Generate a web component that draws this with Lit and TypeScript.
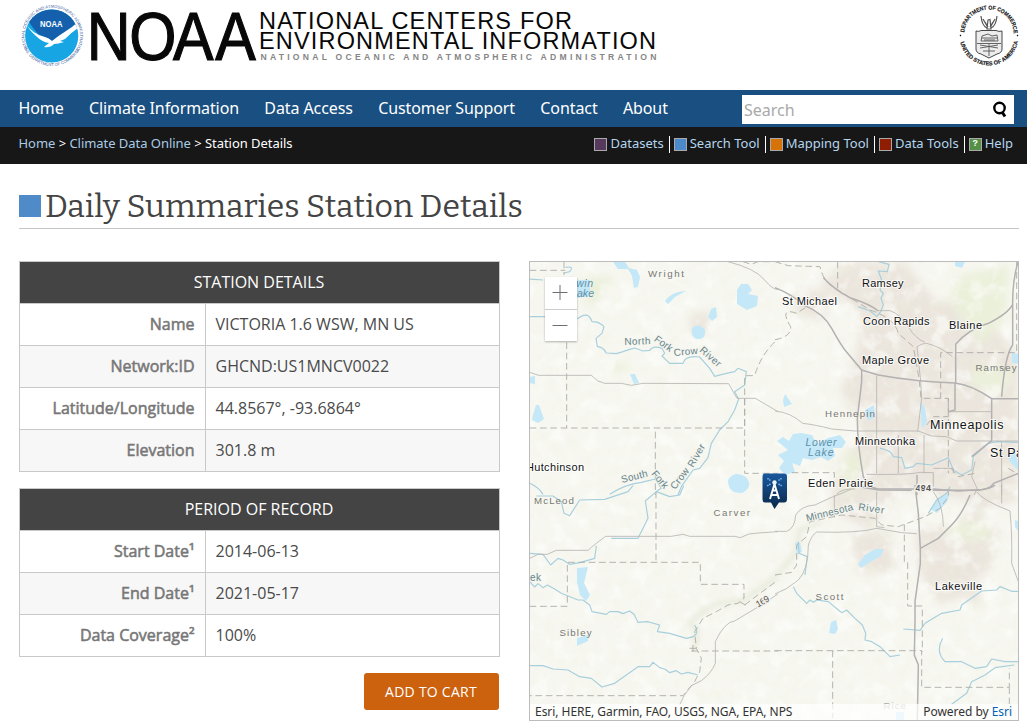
import { LitElement, html, css, svg } from "lit";
import { customElement, property } from "lit/decorators.js";

const NW = "translate(528 255) scale(.33333)";
const NE = "translate(775 255) scale(.33333)";
const SW = "translate(528 485) scale(.33333)";
const SE = "translate(775 485) scale(.33333)";

type Label = [string, number, number, number, number, string, number?];
// text, x, baseline, length, size, class, rotation
const labels: Label[] = [
  ["Wright", 648, 277.3, 36, 9.7, "county"],
  ["Hennepin", 825, 417, 50, 9.7, "county"],
  ["Ramsey", 975.5, 371, 41, 9.7, "county"],
  ["McLeod", 534, 504, 40, 9.7, "county"],
  ["Carver", 713.5, 516, 36.5, 9.7, "county"],
  ["Sibley", 559.5, 636, 32, 9.7, "county"],
  ["Scott", 815.5, 600, 28, 9.7, "county"],
  ["Rice", 883.5, 709, 22.5, 9.7, "county faint"],
  ["Ramsey", 862, 287, 41.5, 11, "city"],
  ["St Michael", 782, 305, 55, 11, "city"],
  ["Coon Rapids", 863, 325, 66.5, 11, "city"],
  ["Blaine", 949, 329, 33, 11, "city"],
  ["Maple Grove", 862, 364, 67, 11, "city"],
  ["Minneapolis", 930, 429, 73.5, 12.5, "city"],
  ["St Paul", 990, 457, 44, 12.5, "city"],
  ["Minnetonka", 855, 445, 60, 11, "city"],
  ["Eden Prairie", 808, 487, 65, 11, "city"],
  ["Lakeville", 935, 590, 47, 11, "city"],
  ["Hutchinson", 526, 471, 58, 11, "city"],
  ["Twin", 570, 287, 23, 10.5, "water"],
  ["Lake", 571, 297, 23, 10.5, "water"],
  ["Lower", 805.5, 446, 31, 10.5, "water"],
  ["Lake", 808, 456.3, 25.5, 10.5, "water"],
  ["ek", 530, 581, 11, 10, "stream"],
  ["North", 624.5, 345, 26, 10, "stream", -2],
  ["Fork", 653.5, 340.5, 20, 10, "stream", 36],
  ["Crow", 674, 356, 24, 10, "stream", -5],
  ["River", 699, 351, 25, 10, "stream", 41],
  ["South", 622, 483, 27, 10, "stream", -14],
  ["Fork", 651, 474, 20, 10, "stream", 50],
  ["Crow", 675, 490, 24, 10, "stream", -52],
  ["River", 693, 468, 25, 10, "stream", -60],
  ["Minnesota", 807, 521.5, 48, 10, "stream", -14],
  ["River", 858, 510, 26, 10, "stream", 8],
];

const roads = {
  nw: [
    "M5 352L32 361L190 361Q208 382 230 385L280 385L310 391L345 385L602 386L627 430H682L750 470",
    "M600 20Q680 40 708 73T750 103",
  ],
  ne: [
    "M305 362V655M370 540V655M447 540V655M428 530L440 430L437 378L426 275Q440 265 455 265Q497 275 532 305",
    "M0 468Q46 472 83 505Q120 509 170 522L240 528H430L470 543L515 545L545 558H730M310 167H345Q380 180 400 215T450 262",
    "M275 658Q400 660 435 652L475 653V695M475 640H535V655M520 470H648M185 718Q200 700 240 702M730 500V535M680 560V720M598 720L606 700L590 665L600 620",
  ],
  sw: [
    "M5 220L30 208H58L85 196H180Q197 180 233 154H430L465 148L485 154H620L637 158Q662 143 690 144L750 140",
    "M750 327Q700 360 680 372L620 408Q590 410 562 470V535Q550 565 520 587L490 602L468 632L455 660",
  ],
  se: [
    "M0 139H35Q60 130 62 90Q80 62 120 60Q160 40 200 25L230 12M305 20V125L328 128M305 130Q250 145 125 141Q110 150 100 180Q100 255 70 285Q35 315 0 327M305 130L380 143L425 146",
    "M605 20Q620 45 705 78Q712 150 710 235L730 290M475 20Q505 60 505 125M680 0V55M178 30V98",
  ],
};

const highways = {
  ne: [
    "M145 68Q180 105 225 128Q285 147 310 168M0 98Q50 118 90 152Q145 175 170 220Q200 275 218 295L260 345L310 360Q420 380 540 384Q590 390 650 431H730",
    "M260 345V380L247 490Q247 570 265 665Q280 700 310 702H475L550 708L600 705Q645 705 656 685L730 655M540 384V465L520 470M542 384V268Q580 223 640 205Q700 175 713 148M729 20Q712 80 713 148V270Q690 300 680 425",
    "M650 431V557L590 605M426 660V720",
  ],
  se: ["M420 0L430 85L436 190V235L420 350V410L418 510L430 540L427 705M436 190L490 160L530 120Q560 90 585 30M245 4L310 15L410 16M470 16L610 16Q650 10 660 0"],
};

const streams = {
  nw: [
    "M5 185H55M0 72L45 75M112 37Q140 32 125 50L108 54M148 192Q180 165 192 200Q215 200 228 215L222 235L204 250L208 275Q225 275 235 294L265 296L285 290L305 283L320 279L345 288L365 286Q375 270 402 280L410 295L402 303L425 325L465 325Q472 300 515 306L545 340L560 364L595 355L620 350L630 340L655 350L650 390L620 410L632 432L620 465L600 500L575 525L550 565L540 608L515 640L495 645L460 695L450 720",
    "M245 718Q290 688 340 682L382 672L400 700L384 710M5 685Q32 697 45 718",
  ],
  ne: ["M310 20L342 28L337 50L310 48L320 75L315 105L325 115L318 130L325 150L317 170L305 184L285 168L250 155", "M315 580Q350 585 355 605L380 608L390 640L415 635L425 625L470 630L520 608L535 645L560 660L590 645L595 605L640 565L665 560L730 562"],
  sw: [
    "M5 205L45 208L68 240L90 220L105 225L125 238L155 233L200 220L205 182M25 33H75L100 50L108 85L125 92L155 45L230 43L300 20L315 2M250 160H330L350 120L360 100L352 48L385 20L425 35L455 30L467 2",
    "M5 290L20 306L30 296L45 308L58 300L80 312L100 325L150 345L165 345L185 360L192 380L235 388L245 380L270 380L285 386L305 378L318 388L330 412L358 410L395 420L388 440L425 445L475 460Q520 455 500 420M5 542L45 542L75 552L120 555L155 575L190 580L222 606L260 595L295 570L330 545L365 545L375 532L395 548L410 552L425 563L445 557L460 567L480 562L510 570",
  ],
  se: ["M55 305L65 325L95 355L105 345L115 352L125 345L160 350L190 375L200 383L215 375L240 400L262 420L272 445L270 465L290 470L315 485L345 515L375 510M385 432L435 436L450 415L475 400L500 385L555 375L560 360L620 318L665 315L675 305L710 319H730M503 460Q480 500 510 530H560L600 550L635 545L650 522L690 530H730M530 658L575 625L590 590L630 570L660 548L718 540", "M70 170L72 205L97 215L90 270M460 85L485 45L515 25L525 5"],
};

const borders = {
  nw: "M5 46H112M116 262V518M5 519H650V360M382 530V720M650 430V655H750M655 362H680Q700 295 750 252M645 20L670 28L690 20H735M108 20V60",
  ne: "M0 20L40 32L135 35Q145 80 180 100L225 128L285 165Q360 190 370 235L415 275L432 370L438 430H520V485H475L455 510M188 20V100M725 20V293H497V430M0 254Q50 245 47 215Q10 155 65 175L100 152M520 430V655M528 640L550 665L600 655M50 653H178V690M700 640L730 658",
  sw: "M384 20V232M120 232H517V298H648V340L630 355L600 360L565 380L525 400L500 440L505 490L520 520L515 560L500 590L465 632H5M118 240V364H5M490 498H750M650 360L700 322L750 285M485 490H510M495 480V505M635 350L655 362",
  se: "M0 270L50 262L65 240V180L95 155L105 110L200 90L300 100L320 120L370 125L450 95L495 70L520 35V5M388 118V230H398V363H442V500M0 497H440V607H703V550M173 497V700M703 607V700",
};

const paths = (list: string[]) => list.map((d) => svg`<path d=${d}/>`);

@customElement("station-map")
class StationMap extends LitElement {
  static styles = css`
    :host { display: block; position: relative; width: 488px; height: 458px; border: 1px solid #bcbcbc; overflow: hidden; }
    .canvas { display: block; }
    .road, .highway, .stream-line, .border, .valley { fill: none; }
    .road { stroke: #b7b5b2; stroke-width: 2.5; }
    .highway { stroke: #b3b1b1; stroke-width: 4.5; }
    .stream-line { stroke: #a7cfdc; stroke-width: 3.5; stroke-linejoin: round; }
    .border { stroke: #aeada8; stroke-width: 2.7; stroke-dasharray: 20 11; }
    .valley { stroke: #e9ebdd; stroke-width: 7; opacity: .7; }
    .lake { fill: #c5e8f8; }
    .urban { fill: #ebe5dd; }
    .park { fill: #ebf0da; }
    text { font-family: "Liberation Sans", Arial, sans-serif; }
    .city { fill: #111; stroke: #fff; stroke-opacity: .75; stroke-width: 2px; paint-order: stroke; }
    .county { fill: #777874; }
    .faint { fill: #aaa; }
    .water { fill: #5c91a9; font-style: italic; }
    .stream { fill: #64858c; stroke: #f5f4ed; stroke-width: 1.5px; paint-order: stroke; }
    .route { fill: #555; font-size: 9px; stroke: #f4f1eb; stroke-width: 3px; paint-order: stroke; }
    .zoom { position: absolute; left: 15px; top: 15px; width: 32px; display: grid; grid-template-rows: 32px 31px; gap: 1px; background: #ccc; box-shadow: 0 1px 2px rgba(0,0,0,.3); }
    .zoom button { border: 0; padding: 0 2px 0 0; background: #fff; display: grid; place-items: center; }
    .zoom svg { display: block; }
    .zoom path { stroke: #6e6e6e; fill: none; }
    .marker { position: absolute; left: 232px; top: 211px; }
    .credits { position: absolute; left: 0; right: 0; bottom: 0; height: 16px; padding: 0 6px 0 5px; display: flex; justify-content: space-between; align-items: center; background: rgba(255,255,255,.72); font: 12px/16px "Noto Sans", sans-serif; letter-spacing: -.04px; color: #323232; }
    .credits span { white-space: pre; }
    .esri { color: #0064b5; }
  `;
  render() {
    return html`
      <svg class="canvas" width="488" height="458" viewBox="530 262 488 458">
        <defs>
          <filter id="soft" x="-20%" y="-20%" width="140%" height="140%"><feGaussianBlur stdDeviation="4"/></filter>
          <filter id="edge"><feGaussianBlur stdDeviation=".6"/></filter>
          <filter id="blend"><feGaussianBlur stdDeviation="2"/></filter>
          <filter id="land" x="0" y="0" width="100%" height="100%">
            <feTurbulence type="fractalNoise" baseFrequency=".09" numOctaves="3" seed="8"/>
            <feColorMatrix values="0 0 0 0 .87  0 0 0 0 .89  0 0 0 0 .76  2.4 0 0 0 -1"/>
          </filter>
          <filter id="patches" x="0" y="0" width="100%" height="100%">
            <feTurbulence type="fractalNoise" baseFrequency=".06" numOctaves="3" seed="21"/>
            <feColorMatrix values="0 0 0 0 .98  0 0 0 0 .98  0 0 0 0 .96  0 4 0 0 -2"/>
          </filter>
        </defs>
        <rect x="529" y="261" width="490" height="460" fill="#f7f7f1"/>
        <g filter="url(#soft)">
          <path class="urban" d="M845 262L905 262L935 300L975 305L1018 355V500L965 515L930 565L955 590L990 572L1000 530L965 500L900 490L870 530L830 510L835 470L862 430L840 390L855 360L862 320L820 285Z"/>
          <path class="urban" d="M915 530L945 525L950 565L980 590L940 605L918 570ZM850 535L890 530L895 570L860 575ZM690 315L710 310L708 330L692 340ZM795 290L830 290L825 320L795 315ZM965 595L980 592L978 610Z"/>
          <path class="park" d="M960 275L1010 265L1005 320L980 345L950 300ZM845 450L865 460L850 500L840 480ZM950 525L990 520L990 540L950 538ZM975 365L1015 370L1000 395L970 385ZM610 362L630 365L625 372L608 370ZM580 280L615 275L590 310Z"/>
        </g>
        <rect x="529" y="261" width="490" height="460" filter="url(#land)" opacity=".4"/>
        <rect x="529" y="261" width="490" height="460" filter="url(#patches)" opacity=".6"/>
        <path class="valley" filter="url(#blend)" d="M694 650L697 630L690 622L705 610L716 604L744 600L770 582L795 555L800 530L822 522"/>
        <g class="lake" filter="url(#edge)">
          <path d="M613 262H625L629 268L637 270L640 277L638 287L634 288L632 276L628 269L618 269ZM665 301Q672 291 686 291L675 297L668 304ZM737 290L741 284L748 284L752 290L748 294L758 296L757 306L747 310L737 304ZM711 309L716 307L717 317L712 321L708 317ZM692 328Q699 322 705 330Q706 340 697 339Q690 337 692 328ZM630 374H635L639 383L634 384ZM533 415L536 405L539 405L544 419L538 423L532 420ZM529 377L535 376V384L529 383ZM728 480Q735 470 746 477Q754 487 742 493Q728 494 728 480ZM571 280L590 280V296L577 298Z"/>
          <path d="M777 441L783 437L789 441L793 434L801 433L812 435L817 444L828 438L840 435L846 442L842 448L833 448L835 456L828 461L821 457L812 460L803 458L800 466L792 463L795 472L785 475L779 468L784 461L778 455L788 450ZM783 400L785 394L792 404L784 407ZM865 410L874 405L875 417L868 421ZM920 401L925 408L927 422L922 429ZM955 262H965L962 268L955 266ZM1012 353L1019 354V364L1012 363ZM1007 454L1015 450L1018 463V470L1010 462Z"/>
          <path d="M577 568L588 567L584 583L590 595L586 601L580 595L577 582ZM577 638L588 635V641L577 646ZM858 564L865 555L875 549L884 549L881 556L870 562L861 568ZM831 622L836 620L838 629L835 634L829 633ZM930 509L939 498L950 493L947 502L937 513ZM896 712H904V720H896ZM1015 520L1018 521V531L1015 527ZM795 543L800 542L802 552L797 554Z"/>
        </g>
        <g transform=${NW}><g class="stream-line">${paths(streams.nw)}</g><path class="border" d=${borders.nw}/><g class="road">${paths(roads.nw)}</g></g>
        <g transform=${NE}><g class="stream-line">${paths(streams.ne)}</g><path class="border" d=${borders.ne}/><g class="road">${paths(roads.ne)}</g><g class="highway">${paths(highways.ne)}</g></g>
        <g transform=${SW}><g class="stream-line">${paths(streams.sw)}</g><path class="border" d=${borders.sw}/><g class="road">${paths(roads.sw)}</g></g>
        <g transform=${SE}><g class="stream-line">${paths(streams.se)}</g><path class="border" d=${borders.se}/><g class="road">${paths(roads.se)}</g><g class="highway">${paths(highways.se)}</g></g>
        ${labels.map(([t, x, y, w, s, c, r = 0]) => svg`<text class=${c} x=${x} y=${y} font-size=${s} textLength=${w} transform=${`rotate(${r} ${x} ${y})`}>${t}</text>`)}
        <text class="route" x="915.5" y="490.5" textLength="15.5" font-weight="bold">494</text>
        <text class="route" x="758" y="607.5" textLength="14" transform="rotate(-30 758 607.5)">169</text>
      </svg>
      <div class="zoom">
        <button aria-label="Zoom in"><svg width="16" height="16"><path d="M.5 7.5H15.5M8 0V15"/></svg></button>
        <button aria-label="Zoom out"><svg width="16" height="16"><path d="M.5 7.5H15.5"/></svg></button>
      </div>
      <svg class="marker" width="26" height="37" viewBox="0 0 26 37">
        <defs><linearGradient id="pin" x2="0" y2="1"><stop stop-color="#19589d"/><stop offset="1" stop-color="#0a2749"/></linearGradient></defs>
        <path d="M3 .5H22Q25 .5 25 3.500V26Q25 29.500 22 29.500H17L12.500 36L9 29.500H3Q.5 29.500 .5 26V3.500Q.5 .5 3 .5Z" fill="url(#pin)"/>
        <circle cx="12.500" cy="9.500" r="2.200" fill="#e9f4ff"/>
        <path d="M12.500 11L8 26M12.500 11L17 26M10.700 17.500H14.300M9.500 22H15.500" stroke="#fff" stroke-width="1.900" fill="none"/>
        <path d="M8.500 7.500L5 5M8.500 11L5 13M16.500 7.500L20 5M16.500 11L20 13" stroke="#78b8ee" stroke-width="1.500" stroke-dasharray="1.500 .8"/>
      </svg>
      <div class="credits"><span>Esri, HERE, Garmin, FAO, USGS, NGA, EPA, NPS</span><span>Powered by <span class="esri">Esri</span></span></div>
    `;
  }
}

@customElement("detail-table")
class DetailTable extends LitElement {
  @property() heading = "";
  @property({ attribute: false }) rows: string[][] = [];
  static styles = css`
    :host { display: block; border: 1px solid #c9c9c9; font: 16px/41px "Open Sans", sans-serif; color: #4a4a4a; }
    .head { height: 41px; background: #444; color: #fff; text-align: center; padding-right: 1px; }
    .row { display: grid; grid-template-columns: 186px 1fr; height: 41px; border-top: 1px solid #c9c9c9; }
    .row:nth-child(odd) { background: #f7f7f7; }
    .label { text-align: right; padding-right: 10.5px; border-right: 1px solid #c9c9c9; color: #777; -webkit-text-stroke: .55px #777; white-space: nowrap; }
    .value { padding-left: 9.5px; white-space: nowrap; }
    .t { display: inline-block; }
  `;
  render() {
    return html`<div class="head"><span class="t">${this.heading}</span></div>
      ${this.rows.map(([k, v]) => html`<div class="row"><div class="label"><span class="t">${k}</span></div><div class="value"><span class="t">${v}</span></div></div>`)}`;
  }
}

@customElement("app-root")
class AppRoot extends LitElement {
  static styles = css`
    :host { display: block; width: 1027px; height: 725px; overflow: hidden; background: #fff; color: #444; font-family: "Noto Sans", sans-serif; }
    .banner { display: block; height: 90px; }
    .nav { height: 37px; background: #1a4f81; display: flex; align-items: center; padding: 0 13px 0 18.5px; justify-content: space-between; color: #fff; font-size: 16px; }
    .links { display: flex; gap: 25.3px; white-space: nowrap; padding-bottom: 2px; letter-spacing: -.09px; }
    .search { width: 272px; height: 29px; box-sizing: border-box; background: #fff; display: flex; align-items: center; justify-content: space-between; padding: 1px 5px 0 2px; color: #a9a9a9; margin-top: 1px; }
    .bar { height: 37px; background: #171717; display: flex; justify-content: space-between; padding: 0 14px 0 18.5px; color: #fff; font-size: 13px; }
    .crumbs { line-height: 33px; white-space: pre; letter-spacing: -.04px; }
    .crumbs a { color: #a8cbe6; }
    .tools { display: flex; align-items: center; height: 35px; color: #b4d6ee; }
    .tool { display: flex; align-items: center; gap: 3px; height: 17px; line-height: 17px; white-space: nowrap; }
    .tool > span:last-child { margin-top: -2px; }
    .tool + .tool { border-left: 1px solid #fff; padding-left: 4px; margin-left: 5px; }
    .chip { width: 11px; height: 11px; border: 1px solid #aaa; font: bold 9px/11px "Liberation Mono", monospace; color: #fff; text-align: center; }
    .violet { background: #57395d; } .blue { background: #4b8acb; } .orange { background: #d57308; } .red { background: #8f1d02; } .green { background: #559047; }
    main { padding: 0 8px 0 19px; }
    .title { height: 64px; border-bottom: 1px solid #c5c5c5; display: flex; align-items: flex-end; gap: 4px; }
    .square { width: 22px; height: 22px; background: #4e8bc8; margin-bottom: 11px; }
    h1 { margin: 0; font: 400 32px/44px "Bitter", "DejaVu Serif", serif; white-space: nowrap; }
    .content { display: grid; grid-template-columns: 481px 490px; gap: 29px; padding-top: 32px; align-items: start; }
    .left { display: flex; flex-direction: column; gap: 16px; }
    .cart { align-self: flex-end; margin-right: 1px; width: 135px; height: 37px; border: 0; border-radius: 3px; padding: 0 1px 0 0; background: #cc610e; color: #fff; font: 14px "Open Sans", sans-serif; letter-spacing: .25px; }
    .arial { font-family: "Liberation Sans", Arial, sans-serif; }
  `;
  render() {
    return html`
      <svg class="banner" width="1027" height="90" viewBox="0 0 1027 90">
        <defs>
          <clipPath id="disc"><circle cx="51.700" cy="36" r="26.600"/></clipPath>
          <path id="ring" d="M33.500 56.200A27.800 27.800 0 1 1 71 56.200"/>
          <path id="ringLow" d="M23.500 47A30.900 30.900 0 0 0 80.500 47"/>
          <path id="sealTop" d="M964.300 36.500A24.800 24.800 0 1 1 1013.700 36.500"/>
          <path id="sealLow" d="M959.800 39.500A29.400 29.400 0 0 0 1018.200 39.500"/>
        </defs>
        <g clip-path="url(#disc)">
          <path d="M25 9H79V63H25Z" fill="#17a5e3"/>
          <path d="M25 9H79V24Q70 32 61 39L52 42Q38 38 28 20Z" fill="#1460ad"/>
          <path d="M22 17Q30 34 45 37Q49 38 52 41Q58 36 66 31Q74 26 82 18L81 26Q72 32 65 39L60 41L64 42Q58 44 54 44Q50 48 44 47L49 43Q42 42 36 36Q29 30 25 22Z" fill="#fff"/>
        </g>
        <text class="arial" x="40" y="27" font-size="9" font-weight="bold" fill="#fff" textLength="22.500" lengthAdjust="spacingAndGlyphs">NOAA</text>
        <g class="arial" font-size="4.200" fill="#3f62a0">
          <text><textPath href="#ring" startOffset="8" textLength="119" lengthAdjust="spacingAndGlyphs">NATIONAL OCEANIC AND ATMOSPHERIC ADMINISTRATION</textPath></text>
          <text><textPath href="#ringLow" startOffset="1" textLength="69" lengthAdjust="spacingAndGlyphs">U.S. DEPARTMENT OF COMMERCE</textPath></text>
        </g>
        <g class="arial" fill="#080808">
          <g transform="translate(0 60) scale(.88 1)"><text y="0" x="98.500 147 196.500 244.500" font-size="69" stroke="#080808" stroke-width="1.200">NOAA</text></g>
          <text x="259" y="29" font-size="23.500" textLength="313">NATIONAL CENTERS FOR</text>
          <text x="259" y="48.500" font-size="23.500" textLength="397">ENVIRONMENTAL INFORMATION</text>
          <text x="260.500" y="60" font-size="8.600" font-weight="bold" fill="#868686" textLength="396">NATIONAL OCEANIC AND ATMOSPHERIC ADMINISTRATION</text>
        </g>
        <g class="arial" font-size="5.700" font-weight="bold" fill="#151515" stroke="#151515" stroke-width=".15">
          <text><textPath href="#sealTop" startOffset="4" textLength="75" lengthAdjust="spacingAndGlyphs">DEPARTMENT OF COMMERCE</textPath></text>
          <text><textPath href="#sealLow" startOffset="3" textLength="80" lengthAdjust="spacingAndGlyphs">UNITED STATES OF AMERICA</textPath></text>
          <circle cx="960.500" cy="35.500" r=".7"/><circle cx="1017.500" cy="35.500" r=".7"/>
        </g>
        <g fill="none" stroke="#333" stroke-width=".9">
          <path d="M976 31Q979 32 981 30.500H996Q999 32 1002 31V49Q1002 53 997 54L989 58L981 54Q976 53 976 49Z" fill="#ececec"/>
          <path d="M977 43.500H1001M989 44V56M980 48L998 45M998 48L980 45M983 51L995 51M981 41L982 36L988 34L992 36L997 35L998 41ZM982 38H997M984 40H995" stroke="#555"/>
          <path d="M981 16Q982 26 987 28M983 19L987 26M985 22L988 27M997 16Q996 26 991 28M995 19L991 26M993 22L990 27M988 20L990 19.500L991 29H987Z" stroke="#555" stroke-width="1.200"/>
        </g>
      </svg>
      <nav class="nav">
        <div class="links">${["Home", "Climate Information", "Data Access", "Customer Support", "Contact", "About"].map((t) => html`<a>${t}</a>`)}</div>
        <div class="search"><span>Search</span><svg width="18" height="20" viewBox="0 0 18 20"><circle cx="8.500" cy="8" r="5.200" fill="none" stroke="#000" stroke-width="2.400"/><path d="M11 12L14 16.500" stroke="#000" stroke-width="3"/></svg></div>
      </nav>
      <div class="bar">
        <div class="crumbs"><a>Home</a> &gt; <a>Climate Data Online</a> &gt; Station Details</div>
        <div class="tools">${[["violet", "Datasets"], ["blue", "Search Tool"], ["orange", "Mapping Tool"], ["red", "Data Tools"], ["green", "Help"]].map(([c, t]) => html`<div class="tool"><span class="chip ${c}">${c === "green" ? "?" : ""}</span><span>${t}</span></div>`)}</div>
      </div>
      <main>
        <div class="title"><span class="square"></span><h1>Daily Summaries Station Details</h1></div>
        <div class="content">
          <div class="left">
            <detail-table heading="STATION DETAILS" .rows=${[["Name", "VICTORIA 1.6 WSW, MN US"], ["Network:ID", "GHCND:US1MNCV0022"], ["Latitude/Longitude", "44.8567°, -93.6864°"], ["Elevation", "301.8 m"]]}></detail-table>
            <detail-table heading="PERIOD OF RECORD" .rows=${[["Start Date¹", "2014-06-13"], ["End Date¹", "2021-05-17"], ["Data Coverage²", "100%"]]}></detail-table>
            <button class="cart">ADD TO CART</button>
          </div>
          <station-map></station-map>
        </div>
      </main>
    `;
  }
}
